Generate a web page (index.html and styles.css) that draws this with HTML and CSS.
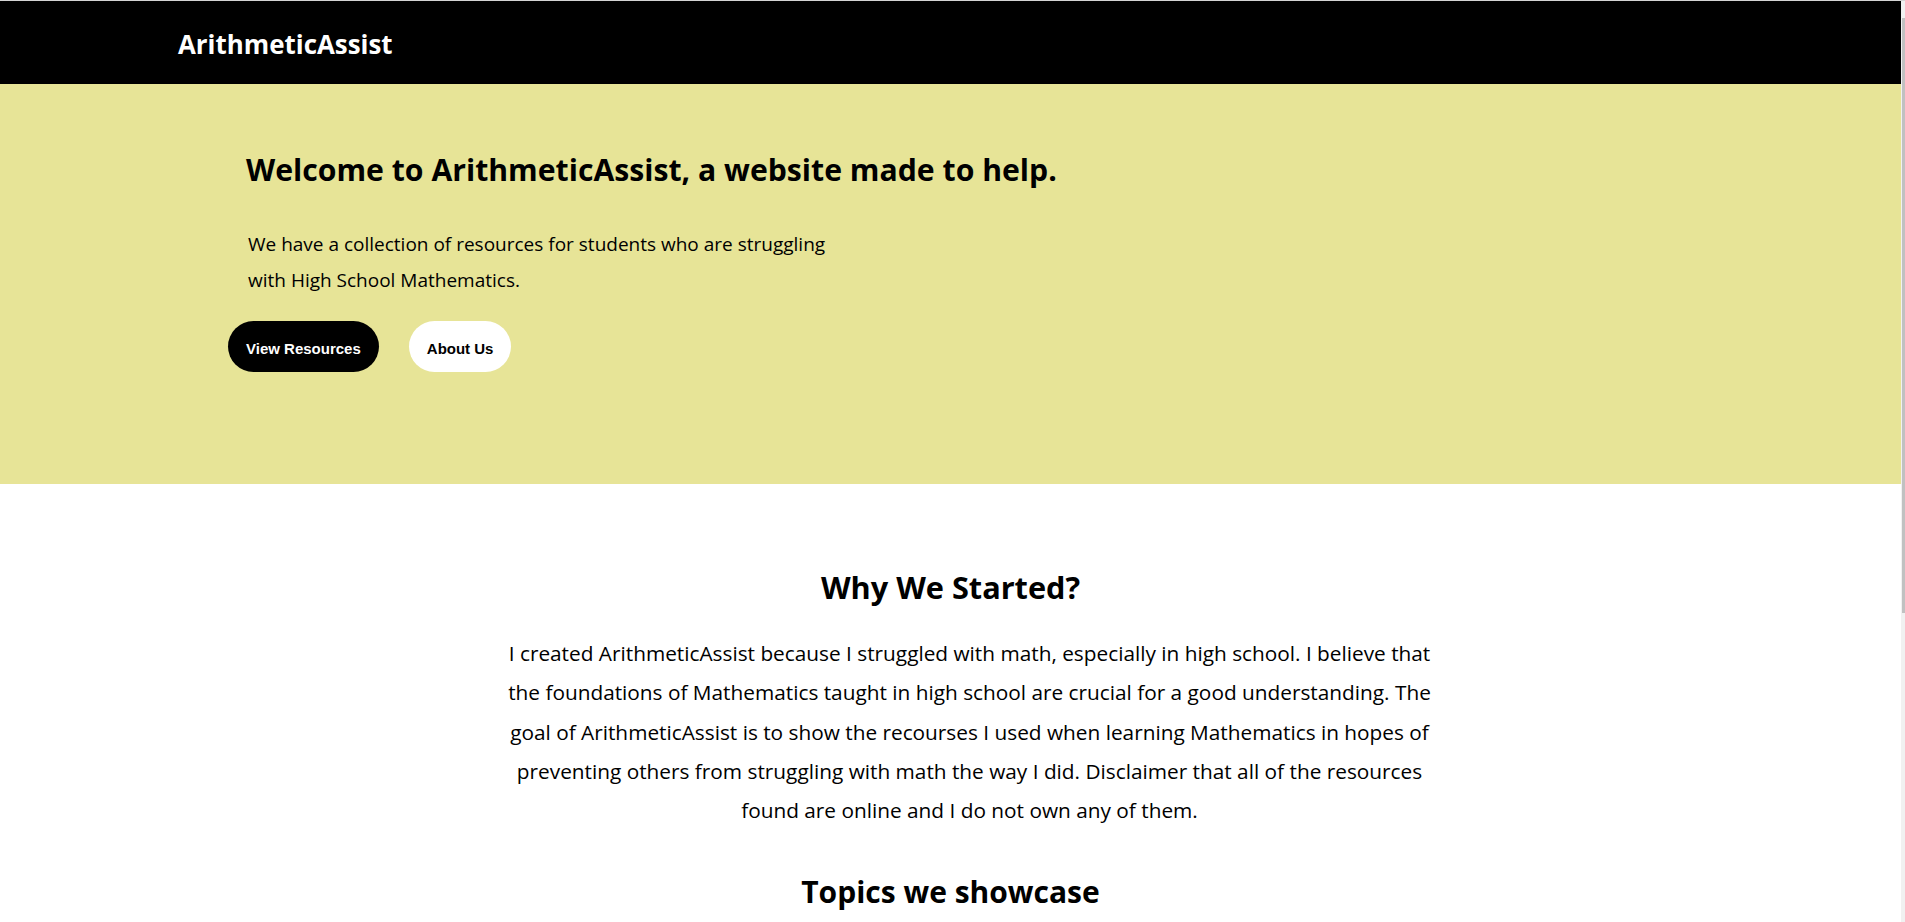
FILE: index.html
```html
<!DOCTYPE html>
<html lang="en">
<head>
<meta charset="utf-8">
<title>ArithmeticAssist</title>
<link rel="stylesheet" href="styles.css">
</head>
<body>
<div class="page">
  <header class="nav">
    <a class="logo" href="#">ArithmeticAssist</a>
  </header>
  <section class="hero">
    <div class="hero-text">
      <h1 class="hero-title">Welcome to ArithmeticAssist, a website made to help.</h1>
      <p class="hero-lead">We have a collection of resources for students who are struggling with High School Mathematics.</p>
    </div>
    <div class="hero-actions">
      <a class="btn btn-dark" href="#">View Resources</a>
      <a class="btn btn-light" href="#">About Us</a>
    </div>
  </section>
  <section class="about">
    <h2 class="section-title why-title">Why We Started?</h2>
    <p class="about-text">I created ArithmeticAssist because I struggled with math, especially in high school. I believe that the foundations of Mathematics taught in high school are crucial for a good understanding. The goal of ArithmeticAssist is to show the recourses I used when learning Mathematics in hopes of preventing others from struggling with math the way I did. Disclaimer that all of the resources found are online and I do not own any of them.</p>
    <h2 class="section-title topics-title">Topics we showcase</h2>
  </section>
</div>
<div class="scrollbar"><div class="scrollbar-thumb"></div></div>
</body>
</html>
```
FILE: styles.css
```css
html {
  overflow: hidden;
}
body {
  margin: 0;
  border-top: 1px solid #d4d4d4;
  background: #ffffff;
  font-family: "Open Sans", "Noto Sans", sans-serif;
  color: #000;
}
.page {
  margin-right: 4px;
}
.nav {
  background: #000;
  height: 83px;
  box-sizing: border-box;
  padding: 30px 0 0 178px;
}
.logo {
  display: block;
  color: #fff;
  text-decoration: none;
  font-weight: 700;
  font-size: 25.9px;
  line-height: 26px;
}
.hero {
  background: #e7e497;
  height: 400px;
  box-sizing: border-box;
  padding: 68px 0 0 228px;
}
.hero-text {
  padding-left: 18px;
}
.hero-title {
  margin: 0;
  font-size: 30.2px;
  line-height: 36px;
  font-weight: 700;
}
.hero-lead {
  margin: 37.5px 0 0;
  padding-left: 2px;
  max-width: 610px;
  font-size: 19px;
  line-height: 36.5px;
}
.hero-actions {
  display: flex;
  gap: 30px;
  margin-top: 22.5px;
}
.btn {
  display: block;
  height: 51px;
  box-sizing: border-box;
  padding: 19px 18px 0;
  border-radius: 26px;
  font-family: "Liberation Sans", Arial, sans-serif;
  font-weight: 700;
  font-size: 15px;
  line-height: 17px;
  text-decoration: none;
}
.btn-dark {
  background: #000;
  color: #fff;
}
.btn-light {
  background: #fff;
  color: #000;
}
.about {
  padding-top: 85px;
  display: flex;
  flex-direction: column;
  align-items: center;
}
.section-title {
  margin: 0;
  font-size: 30px;
  line-height: 36px;
  font-weight: 700;
  text-align: center;
}
.why-title {
  font-size: 30.7px;
}
.about-text {
  margin: 29px 0 0;
  width: 944px;
  padding-left: 38px;
  font-size: 20.8px;
  line-height: 39.25px;
  text-align: center;
}
.topics-title {
  margin-top: 43.5px;
}
.scrollbar {
  position: fixed;
  top: 1px;
  right: 0;
  bottom: 0;
  width: 4px;
  background: #f1f1f1;
}
.scrollbar-thumb {
  position: absolute;
  top: 17px;
  right: 0;
  width: 3px;
  height: 595px;
  background: #c1c1c1;
}
```
